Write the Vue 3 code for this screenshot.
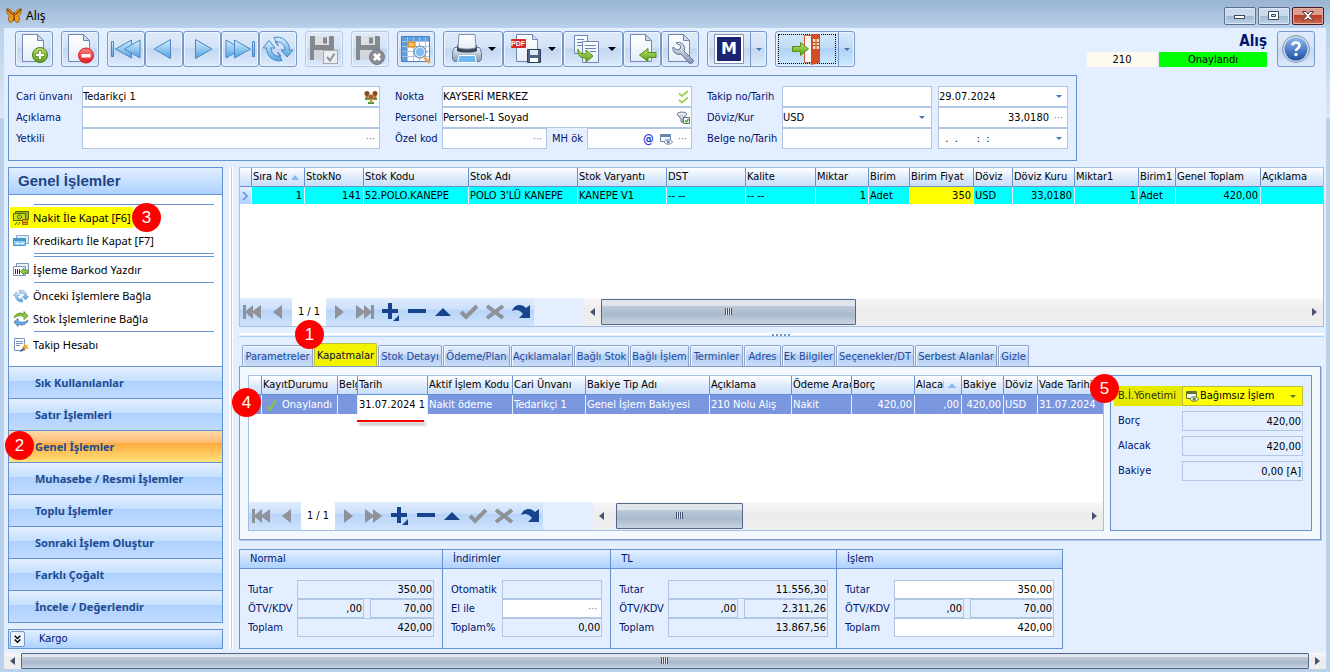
<script setup>
import { ref } from 'vue'

const tools = [
  { icon: 'new', label: 'Yeni' },
  { icon: 'remove', label: 'Sil', gap: true },
  { icon: 'first', label: 'İlk', gap: true },
  { icon: 'prev', label: 'Önceki' },
  { icon: 'next', label: 'Sonraki' },
  { icon: 'last', label: 'Son' },
  { icon: 'refresh', label: 'Yenile' },
  { icon: 'save', label: 'Kaydet', gap: true, disabled: true },
  { icon: 'discard', label: 'Vazgeç', gap: true, disabled: true },
  { icon: 'lookup', label: 'Ara', gap: true },
  { icon: 'print', label: 'Yazdır', gap: true, menu: true },
  { icon: 'pdf', label: 'PDF kaydet', menu: true, tag: 'PDF' },
  { icon: 'copy', label: 'Kopyala', menu: true },
  { icon: 'import', label: 'Aktar' },
  { icon: 'wrench', label: 'Ayarlar' },
  { icon: 'mail', label: 'M', gap: true, split: true, tag: 'M' },
  { icon: 'exit', label: 'Çıkış', gap: true, split: true, focus: true },
]

const tasks = [
  { line: true },
  { icon: 'cash', text: 'Nakit İle Kapat [F6]', mark: true, badge: 3 },
  { icon: 'cards', text: 'Kredikartı İle Kapat [F7]' },
  { line: true },
  { line: true },
  { icon: 'barcode', text: 'İşleme Barkod Yazdır' },
  { line: true },
  { icon: 'refresh', text: 'Önceki İşlemlere Bağla' },
  { icon: 'swap', text: 'Stok İşlemlerine Bağla' },
  { line: true },
  { icon: 'account', text: 'Takip Hesabı' },
]

const groups = [
  'Sık Kullanılanlar', 'Satır İşlemleri', 'Genel İşlemler', 'Muhasebe / Resmi İşlemler',
  'Toplu İşlemler', 'Sonraki İşlem Oluştur', 'Farklı Çoğalt', 'İncele / Değerlendir',
]
const activeGroup = ref('Genel İşlemler')

const lineCols = [
  { w: 11, t: '', v: '', mark: true },
  { w: 53, t: 'Sıra No', v: '1', r: true, sort: true },
  { w: 59, t: 'StokNo', v: '141', r: true },
  { w: 105, t: 'Stok Kodu', v: '52.POLO.KANEPE' },
  { w: 109, t: 'Stok Adı', v: "POLO 3'LÜ KANEPE" },
  { w: 89, t: 'Stok Varyantı', v: 'KANEPE V1' },
  { w: 79, t: 'DST', v: '-- --' },
  { w: 70, t: 'Kalite', v: '-- --' },
  { w: 53, t: 'Miktar', v: '1', r: true },
  { w: 41, t: 'Birim', v: 'Adet' },
  { w: 64, t: 'Birim Fiyat', v: '350', r: true, hot: true },
  { w: 39, t: 'Döviz', v: 'USD' },
  { w: 62, t: 'Döviz Kuru', v: '33,0180', r: true },
  { w: 64, t: 'Miktar1', v: '1', r: true },
  { w: 37, t: 'Birim1', v: 'Adet' },
  { w: 85, t: 'Genel Toplam', v: '420,00', r: true },
  { t: 'Açıklama', v: '' },
]

const closeCols = [
  { w: 12, t: '', v: '', mark: true },
  { w: 76, t: 'KayıtDurumu', v: 'Onaylandı', ok: true },
  { w: 20, t: 'Belge', v: '' },
  { w: 70, t: 'Tarih', v: '31.07.2024 1', edit: true },
  { w: 85, t: 'Aktif İşlem Kodu', v: 'Nakit ödeme' },
  { w: 73, t: 'Cari Ünvanı', v: 'Tedarikçi 1' },
  { w: 124, t: 'Bakiye Tip Adı', v: 'Genel İşlem Bakiyesi' },
  { w: 82, t: 'Açıklama', v: '210 Nolu Alış' },
  { w: 60, t: 'Ödeme Aracı', v: 'Nakit' },
  { w: 63, t: 'Borç', v: '420,00', r: true },
  { w: 47, t: 'Alacak', v: ',00', r: true, sort: true },
  { w: 42, t: 'Bakiye', v: '420,00', r: true },
  { w: 34, t: 'Döviz', v: 'USD' },
  { t: 'Vade Tarihi', v: '31.07.2024' },
]

const navIcons = ['n-first', 'n-prev', 'count', 'n-next', 'n-last', 'n-add', 'n-del', 'n-edit', 'n-ok', 'n-no', 'n-redo']
const closeNavIcons = navIcons.map((n) => (n === 'n-last' ? 'n-forward' : n))
const navNames = {
  'n-first': 'İlk kayıt', 'n-prev': 'Önceki kayıt', 'n-next': 'Sonraki kayıt', 'n-last': 'Son kayıt', 'n-forward': 'İleri',
  'n-add': 'Ekle', 'n-del': 'Sil', 'n-edit': 'Düzenle', 'n-ok': 'Onayla', 'n-no': 'İptal', 'n-redo': 'Yenile',
}

const tabs = [
  ['Parametreler', 71], ['Kapatmalar', 63], ['Stok Detayı', 64], ['Ödeme/Plan', 67], ['Açıklamalar', 62],
  ['Bağlı Stok', 55], ['Bağlı İşlem', 59], ['Terminler', 53], ['Adres', 37], ['Ek Bilgiler', 53],
  ['Seçenekler/DT', 78], ['Serbest Alanlar', 82], ['Gizle', 31],
]
const activeTab = ref('Kapatmalar')

const balances = [
  { id: 'bal-borc', label: 'Borç', value: '420,00' },
  { id: 'bal-alacak', label: 'Alacak', value: '420,00' },
  { id: 'bal-bakiye', label: 'Bakiye', value: '0,00 [A]' },
]

const totals = [
  { key: 'normal', title: 'Normal', rows: [['Tutar', ['350,00']], ['ÖTV/KDV', [',00', '70,00']], ['Toplam', ['420,00']]] },
  { key: 'ind', title: 'İndirimler', rows: [['Otomatik', ['']], ['El ile', [''], 'more'], ['Toplam%', ['0,00']]] },
  { key: 'tl', title: 'TL', rows: [['Tutar', ['11.556,30']], ['ÖTV/KDV', [',00', '2.311,26']], ['Toplam', ['13.867,56']]] },
  { key: 'islem', title: 'İşlem', rows: [['Tutar', ['350,00'], 'open'], ['ÖTV/KDV', [',00', '70,00']], ['Toplam', ['420,00'], 'open']] },
]
</script>

<template>
  <div class="window">
    <svg class="defs" width="0" height="0" aria-hidden="true">
      <defs>
        <linearGradient id="g-blue" x1="0" y1="0" x2="0" y2="1"><stop offset="0" stop-color="#d6efff" /><stop offset="1" stop-color="#4fa3e0" /></linearGradient>
        <linearGradient id="g-doc" x1="0" y1="0" x2="0" y2="1"><stop offset="0" stop-color="#ffffff" /><stop offset="1" stop-color="#e6edf7" /></linearGradient>
        <linearGradient id="g-green" x1="0" y1="0" x2="0" y2="1"><stop offset="0" stop-color="#bfe36a" /><stop offset="1" stop-color="#5b9c17" /></linearGradient>
        <linearGradient id="g-red" x1="0" y1="0" x2="0" y2="1"><stop offset="0" stop-color="#ff8080" /><stop offset="1" stop-color="#e01c1c" /></linearGradient>
        <linearGradient id="g-help" x1="0" y1="0" x2="0" y2="1"><stop offset="0" stop-color="#8fb8ee" /><stop offset="1" stop-color="#1c4fa5" /></linearGradient>
        <linearGradient id="g-steel" x1="0" y1="0" x2="0" y2="1"><stop offset="0" stop-color="#f0f4fa" /><stop offset="1" stop-color="#8094b4" /></linearGradient>
      </defs>
      <symbol id="i-page" viewBox="0 0 32 32">
        <path d="M4.500 1.500h15l6 6v21h-21z" fill="url(#g-doc)" stroke="#7288b4" />
        <path d="M19.500 1.500v6h6z" fill="#cfdcf0" stroke="#7288b4" />
      </symbol>
      <symbol id="i-new" viewBox="0 0 32 32">
        <use href="#i-page" />
        <circle cx="22" cy="22" r="7.500" fill="url(#g-green)" stroke="#4a7d12" />
        <path d="M20.500 17.500h3v3h3v3h-3v3h-3v-3h-3v-3h3z" fill="#fff" stroke="#4a7d12" stroke-width=".7" />
      </symbol>
      <symbol id="i-remove" viewBox="0 0 32 32">
        <use href="#i-page" />
        <circle cx="22" cy="22.500" r="7.500" fill="url(#g-red)" stroke="#d32020" />
        <rect x="17.500" y="21" width="9" height="3.500" fill="#fff" />
      </symbol>
      <symbol id="i-first" viewBox="0 0 32 32">
        <g fill="url(#g-blue)" stroke="#4c86c4" stroke-linejoin="round"><rect x="1.500" y="8.500" width="2" height="15" /><path d="M21.500 7v18L5.500 16z" /><path d="M30 7v18L14.500 16z" /></g>
      </symbol>
      <symbol id="i-prev" viewBox="0 0 32 32"><path d="M22.500 6.500v19L6 16z" fill="url(#g-blue)" stroke="#4c86c4" stroke-linejoin="round" /></symbol>
      <symbol id="i-next" viewBox="0 0 32 32"><path d="M9.500 6.500v19L26 16z" fill="url(#g-blue)" stroke="#4c86c4" stroke-linejoin="round" /></symbol>
      <symbol id="i-last" viewBox="0 0 32 32">
        <g fill="url(#g-blue)" stroke="#4c86c4" stroke-linejoin="round"><rect x="28.500" y="8.500" width="2" height="15" /><path d="M2 7v18l15.500-9z" /><path d="M10.500 7v18l16-9z" /></g>
      </symbol>
      <symbol id="i-refresh" viewBox="0 0 32 32">
        <g fill="url(#g-blue)" stroke="#4c86c4" stroke-linejoin="round">
          <path d="M12 4.500a12.500 12.500 0 0 1 15.500 12.500h3.500l-6 7-6-7h4a8 8 0 0 0-10-8l3.500 4z" />
          <path d="M20 27.500A12.500 12.500 0 0 1 4.500 15H1l6-7.500 6 7.500H9a8 8 0 0 0 10 8l-3.500-4z" />
        </g>
      </symbol>
      <symbol id="i-disk" viewBox="0 0 32 32">
        <path d="M2 3h23l1 1v23H2z" fill="#84898f" /><path d="M7 3h14v9H7z" fill="#dde1e6" /><path d="M15 4.500h4v6h-4z" fill="#84898f" /><path d="M6 17h16v10H6z" fill="#d3d7dd" />
      </symbol>
      <symbol id="i-save" viewBox="0 0 32 32">
        <use href="#i-disk" /><rect x="15.500" y="17.500" width="14" height="13" fill="#eceef1" stroke="#a3a8ae" /><path d="M19 24l3 3.500 4.500-7" fill="none" stroke="#92979d" stroke-width="2" />
      </symbol>
      <symbol id="i-discard" viewBox="0 0 32 32">
        <use href="#i-disk" /><circle cx="23" cy="24" r="7.500" fill="#8b8f95" stroke="#76797e" /><path d="M20 21l6 6m0-6l-6 6" stroke="#fff" stroke-width="3" />
      </symbol>
      <symbol id="i-lookup" viewBox="0 0 32 32">
        <path d="M1.500 3.500h28v25h-28z" fill="#fff" stroke="#4c7fbd" /><path d="M2 4h27v4H2zM2 4h5v24H2z" fill="#5f9edb" />
        <path d="M2 8.500h27M2 13.500h27M2 18.500h27M2 23.500h27M7.500 4v24M13.500 4v24M19.500 4v24M25.500 4v24" stroke="#a6c3e6" fill="none" />
        <path d="M8 9h7v5H8z" fill="#f8c05c" stroke="#c9761b" />
        <path d="M25 25l4 4" stroke="#f0a44c" stroke-width="3" stroke-linecap="round" /><circle cx="20" cy="19" r="6" fill="#cfe6fb" stroke="#5b7fae" /><circle cx="20" cy="19" r="4" fill="#82b8ec" />
      </symbol>
      <symbol id="i-print" viewBox="0 0 32 32">
        <path d="M3.500 14.500h25l2 5v7l-2 2h-25l-2-2v-7z" fill="url(#g-steel)" stroke="#6b7d9c" /><path d="M6 12h20v6c-4 2-16 2-20 0z" fill="#39465c" />
        <path d="M8 1.500h16l1 13c-4 2-14 2-18 0z" fill="url(#g-doc)" stroke="#7f8fab" /><path d="M8 22.500h16l1.500 7h-19z" fill="#6fb9f2" stroke="#fff" />
      </symbol>
      <symbol id="i-pdf" viewBox="0 0 32 32">
        <path d="M5.500 1.500h16l5 5v22h-21z" fill="url(#g-doc)" stroke="#7288b4" /><path d="M21.500 1.500v5h5" fill="#cfdcf0" stroke="#7288b4" />
        <path d="M16.500 16.500h13v13h-13z" fill="#4d6385" stroke="#2f3e58" /><path d="M19 17h8v5h-8z" fill="#dfe7f3" /><path d="M19 25h8v4h-8z" fill="#fff" />
      </symbol>
      <symbol id="i-copy" viewBox="0 0 32 32">
        <path d="M3.500 2.500h13v18h-13z" fill="url(#g-doc)" stroke="#7288b4" /><path d="M6 6.500h7M6 9.500h7M6 12.500h7" stroke="#5f84bf" />
        <path d="M11.500 8.500h16v21h-16z" fill="url(#g-doc)" stroke="#7288b4" /><path d="M14 12.500h11M14 15.500h11M19 18.500h6" stroke="#5f84bf" />
        <path d="M7 16c1 4 4 5 8 5v-4l7 6-7 6v-4c-6 0-9-3-8-9z" fill="url(#g-green)" stroke="#558d1a" />
      </symbol>
      <symbol id="i-import" viewBox="0 0 32 32">
        <use href="#i-page" /><path d="M30 19.500v5h-8v4l-8.500-6.500 8.500-6.500v4z" fill="url(#g-green)" stroke="#558d1a" />
      </symbol>
      <symbol id="i-wrench" viewBox="0 0 32 32">
        <use href="#i-page" /><path d="M12 10a6 6 0 0 1 8 8l9 9c1 3-2 4-4 3l-8-9a6 6 0 0 1-8-7l4 3 3-1 1-3z" fill="url(#g-steel)" stroke="#5e6f8e" />
      </symbol>
      <symbol id="i-mail" viewBox="0 0 32 32">
        <path d="M1.500 1.500h29v29h-29z" fill="#fff" stroke="#8593b5" /><path d="M4 4h24v24H4z" fill="#1b2470" />
      </symbol>
      <symbol id="i-exit" viewBox="0 0 32 32">
        <path d="M13.500 2.500h12v27h-12z" fill="#fff" stroke="#d9532c" /><path d="M20 1h9v29l-9 2z" fill="#d04f26" /><path d="M22 6h6v10h-6z" fill="#f3dcc4" /><path d="M22 9.500h6M22 12.500h6M25 6v10" stroke="#c0471f" />
        <path d="M1.500 13.500h8v-4l8 6.500-8 6.500v-4h-8z" fill="url(#g-green)" stroke="#558d1a" />
      </symbol>
      <symbol id="i-help" viewBox="0 0 32 32">
        <circle cx="16" cy="16" r="13.500" fill="#d3deed" stroke="#8695ae" /><circle cx="16" cy="16" r="11.500" fill="url(#g-help)" />
        <path d="M12.500 12.500c0-4 7-4 7 0 0 3-3.500 2.500-3.500 5.500" fill="none" stroke="#fff" stroke-width="2.500" /><circle cx="16" cy="21.500" r="1.700" fill="#fff" />
      </symbol>
      <symbol id="i-butterfly" viewBox="0 0 16 16">
        <path d="M8 6C6 2 2 0 .5 1c0 4 1.500 6 3 7C2 9 2 13 4 14.500c2 .5 3.500-2 4-4 .5 2 2 4.500 4 4C14 13 14 9 12.500 8c1.500-1 3-3 3-7C14 0 10 2 8 6z" fill="#ee9718" stroke="#6e3c0c" stroke-width=".6" /><path d="M8 4.500v8M1 1.500l5.500 5M15 1.500l-5.500 5" stroke="#4a2506" />
      </symbol>
      <symbol id="i-cash" viewBox="0 0 16 16">
        <path d="M2.500 1.500h13v8h-13z" fill="#a5b61a" stroke="#4e6a08" /><path d="M.5 3.500h12v7H.5z" fill="#c9dc20" stroke="#4e6a08" /><circle cx="6.500" cy="7" r="2" fill="none" stroke="#4e6a08" />
        <path d="M2 15l2-3m1 3l2-3" stroke="#4e6a08" /><path d="M9.500 9.500h5v5h-5z" fill="#f0a800" stroke="#9b6400" /><path d="M9 12.500h6" stroke="#9b6400" />
      </symbol>
      <symbol id="i-cards" viewBox="0 0 16 16">
        <path d="M3.500 2.500h12v8h-12z" fill="#dceefc" stroke="#8aa9cc" /><path d="M.5 5.500h12v7H.5z" fill="#8fd3f4" stroke="#4a94c8" /><path d="M1 6h11v2H1z" fill="#4a94c8" /><path d="M3 10.500h3M8 10.500h3" stroke="#fff" />
      </symbol>
      <symbol id="i-barcode" viewBox="0 0 16 16">
        <path d="M3.500 1.500h12v10h-12z" fill="#eef4fc" stroke="#7a93bd" /><path d="M.5 4.500h12v9H.5z" fill="#fff" stroke="#7a93bd" /><path d="M2.500 7v5M4.500 7v5M6.500 7v5" stroke="#28324c" /><path d="M15 8h-4V6L7.500 9.500 11 13v-2h4z" fill="#8cc63f" stroke="#4d8a1c" stroke-width=".7" />
      </symbol>
      <symbol id="i-swap" viewBox="0 0 16 16">
        <path d="M1 7c1-5 7-6 10-4V.5L15 5l-4 3.500V6C8 4 4 4.500 1 7z" fill="#8cc63f" stroke="#4d8a1c" stroke-width=".7" /><path d="M15 9c-1 5-7 6-10 4v2.500L1 11l4-3.500V10c3 2 7 1.500 10-1z" fill="#6aaee6" stroke="#2f67a8" stroke-width=".7" />
      </symbol>
      <symbol id="i-account" viewBox="0 0 16 16">
        <path d="M1.500 1.500h10v12h-10z" fill="#fff" stroke="#7a93bd" /><path d="M3 4.500h7M3 6.500h7M3 8.500h4" stroke="#7a93bd" /><path d="M7.500 14.500L12 10" stroke="#35507e" stroke-width="1.500" /><path d="M11.500 6l1 2.500 2.500-1-1 2.500 2 2-3-.5-1.500 2.500v-3l-3-1 2.500-1z" fill="#f5a623" />
      </symbol>
      <symbol id="i-people" viewBox="0 0 16 16">
        <path d="M2 9h4v2H2zM10 9h4v2h-4zM5 13h6v2H5z" fill="#4b9a3a" /><path d="M2.500 6.500h3v3h-3zM10.500 6.500h3v3h-3z" fill="#b5762f" /><circle cx="4" cy="4.500" r="2.500" fill="#8a4b1c" /><circle cx="12" cy="4.500" r="2.500" fill="#8a4b1c" /><path d="M6.500 9.500h3v4h-3z" fill="#d79a55" /><circle cx="8" cy="8" r="2.500" fill="#a55f28" />
      </symbol>
      <symbol id="i-checks" viewBox="0 0 16 16"><path d="M4 4.500l3 2.500 6-5M4 11l3 2.500 6-5" fill="none" stroke="#a6d158" stroke-width="2" /></symbol>
      <symbol id="i-filter" viewBox="0 0 16 16">
        <ellipse cx="7" cy="4" rx="5" ry="2" fill="#e4e8ee" stroke="#6d7a8e" /><path d="M2.500 5l3.500 4v3h2V9l3-4" fill="#c8ced8" stroke="#6d7a8e" /><path d="M8.500 7.500h6v6h-6z" fill="#fff" stroke="#5d6f8c" /><path d="M10 10.500l1.500 1.500 2-3" fill="none" stroke="#55a630" stroke-width="1.500" />
      </symbol>
      <symbol id="i-view" viewBox="0 0 16 16">
        <path d="M2.500 3.500h10v7h-10z" fill="#f4f8fd" stroke="currentColor" /><path d="M3 4h9v2H3z" fill="currentColor" /><path d="M6 11c1.500-3 7-3 8.500 0-1.500 3-7 3-8.500 0z" fill="#fff" stroke="currentColor" /><circle cx="10.200" cy="11" r="1.600" fill="currentColor" />
      </symbol>
      <symbol id="i-tick" viewBox="0 0 16 16"><path d="M3 9l3 4 6-10" fill="none" stroke="#8bc53f" stroke-width="2" /></symbol>
      <symbol id="i-n-first" viewBox="0 0 20 20"><path d="M0 3h3v6l7-6v6l8-6v14l-8-6v6l-7-6v6H0z" fill="#8f9399" /></symbol>
      <symbol id="i-n-prev" viewBox="0 0 20 20"><path d="M13 3v14l-9-7z" fill="#8f9399" /></symbol>
      <symbol id="i-n-next" viewBox="0 0 20 20"><path d="M6 3v14l9-7z" fill="#8f9399" /></symbol>
      <symbol id="i-n-last" viewBox="0 0 20 20"><path d="M19 3h-3v6L9 3v6L1 3v14l8-6v6l7-6v6h3z" fill="#8f9399" /></symbol>
      <symbol id="i-n-forward" viewBox="0 0 20 20"><path d="M1 3v14l8-6v6l9-7-9-7v6z" fill="#8f9399" /></symbol>
      <symbol id="i-n-add" viewBox="0 0 20 20"><path d="M7 1h4v6h6v4h-6v6H7v-6H1V7h6zM18 13v6h-6z" fill="#17448c" /></symbol>
      <symbol id="i-n-del" viewBox="0 0 20 20"><path d="M1 7h18v4H1z" fill="#17448c" /></symbol>
      <symbol id="i-n-edit" viewBox="0 0 20 20"><path d="M2 14l8-8 8 8z" fill="#17448c" /></symbol>
      <symbol id="i-n-ok" viewBox="0 0 20 20"><path d="M2 10l5 5L18 4" fill="none" stroke="#8f9399" stroke-width="4" /></symbol>
      <symbol id="i-n-no" viewBox="0 0 20 20"><path d="M2 4l16 12M18 4L2 16" stroke="#8f9399" stroke-width="4" /></symbol>
      <symbol id="i-n-redo" viewBox="0 0 20 20"><path d="M1 9c2-7 10-8 14-3l4-3v13H8l4-4c-3-4-7-5-11-3z" fill="#17448c" /></symbol>
    </svg>

    <header class="titlebar">
      <svg class="ic16"><use href="#i-butterfly" /></svg>
      <span class="app-name">Alış</span>
      <div class="win-buttons">
        <button type="button" aria-label="Simge durumuna küçült"><svg viewBox="0 0 32 18"><rect x="10.500" y="8.500" width="10" height="3" fill="#fff" stroke="#3d4a5c" /></svg></button>
        <button type="button" aria-label="Ekranı kapla"><svg viewBox="0 0 32 18"><path d="M10.500 4.500h10v8h-10zM13.500 7.500v2h4v-2z" fill="#fff" fill-rule="evenodd" stroke="#3d4a5c" /></svg></button>
        <button type="button" class="close" aria-label="Kapat"><svg viewBox="0 0 32 18"><path d="M10.500 4.500h3.500l2 2.500 2-2.500h3.500l-4 4.500 4 4h-3.500l-2-2-2 2h-3.500l4-4z" fill="#fff" stroke="#5a3438" /></svg></button>
      </div>
    </header>

    <main class="client">
      <div class="toolbar">
        <div v-for="t in tools" :key="t.icon" class="tool" :class="{ gap: t.gap, menu: t.menu, split: t.split, focus: t.focus }">
          <button type="button" class="tool-main" :disabled="t.disabled" :aria-label="t.label">
            <span class="glyph"><svg class="ic32"><use :href="'#i-' + t.icon" /></svg><span v-if="t.tag" :class="'tag-' + t.icon">{{ t.tag }}</span></span>
            <i v-if="t.menu" class="caret black"></i>
          </button>
          <button v-if="t.split" type="button" class="tool-drop" :aria-label="t.label + ' seçenekleri'"><i class="caret"></i></button>
        </div>
        <div class="status">
          <h1>Alış</h1>
          <div class="status-row"><output class="doc-no">210</output><output class="state">Onaylandı</output></div>
        </div>
        <button type="button" class="help" aria-label="Yardım"><svg class="ic32"><use href="#i-help" /></svg></button>
      </div>

      <form class="form" @submit.prevent>
        <label for="cari">Cari ünvanı</label>
        <div class="field"><input id="cari" value="Tedarikçi 1" /><button type="button" aria-label="Cari seç"><svg class="ic16"><use href="#i-people" /></svg></button></div>
        <label for="nokta">Nokta</label>
        <div class="field"><input id="nokta" value="KAYSERİ MERKEZ" /><button type="button" aria-label="Nokta seç"><svg class="ic16"><use href="#i-checks" /></svg></button></div>
        <label for="takip">Takip no/Tarih</label>
        <div class="field"><input id="takip" /></div>
        <div class="field after"><input id="tarih" aria-label="Tarih" value="29.07.2024" /><button type="button" aria-label="Tarih seç"><i class="caret"></i></button></div>

        <label for="aciklama">Açıklama</label>
        <div class="field"><input id="aciklama" /></div>
        <label for="personel">Personel</label>
        <div class="field"><input id="personel" value="Personel-1 Soyad" /><button type="button" aria-label="Personel seç"><svg class="ic16"><use href="#i-filter" /></svg></button></div>
        <label for="doviz">Döviz/Kur</label>
        <div class="field"><select id="doviz"><option>USD</option></select><i class="caret over"></i></div>
        <div class="field after"><input class="num" aria-label="Kur" value="33,0180" /><button type="button" class="dots" aria-label="Kur seç">···</button></div>

        <label for="yetkili">Yetkili</label>
        <div class="field"><input id="yetkili" /><button type="button" class="dots" aria-label="Yetkili seç">···</button></div>
        <label for="ozel">Özel kod</label>
        <div class="pair">
          <div class="field"><input id="ozel" /><button type="button" class="dots" aria-label="Özel kod seç">···</button></div>
          <label for="mhok">MH ök</label>
          <div class="field"><input id="mhok" /><button type="button" class="at" aria-label="E-posta">@</button><button type="button" aria-label="Görüntüle"><svg class="ic16 steel"><use href="#i-view" /></svg></button><button type="button" class="dots" aria-label="MH ök seç">···</button></div>
        </div>
        <label for="belge">Belge no/Tarih</label>
        <div class="field"><input id="belge" /></div>
        <div class="field after"><input aria-label="Belge tarihi" class="mask" value="  .  .      :  :" /><button type="button" aria-label="Belge tarihi seç"><i class="caret"></i></button></div>
      </form>

      <div class="work">
        <aside class="sidebar">
          <section class="nav-box">
            <h2>Genel İşlemler</h2>
            <ul class="tasks">
              <li v-for="(t, i) in tasks" :key="i" :class="{ line: t.line }">
                <button v-if="t.text" type="button" :class="{ mark: t.mark }"><svg class="ic16"><use :href="'#i-' + t.icon" /></svg>{{ t.text }}</button>
                <b v-if="t.badge" class="badge b3">{{ t.badge }}</b>
              </li>
            </ul>
            <div v-for="g in groups" :key="g" class="group" :class="{ on: g === activeGroup }">
              <button type="button" @click="activeGroup = g">{{ g }}</button>
              <b v-if="g === 'Genel İşlemler'" class="badge b2">2</b>
            </div>
          </section>
          <div class="cargo">
            <button type="button" aria-label="Kargo bölümünü aç"><svg viewBox="0 0 14 14"><path d="M4 3l3 3 3-3M4 7l3 3 3-3" fill="none" stroke="#000" stroke-width="1.500" /></svg></button>
            <span>Kargo</span>
          </div>
        </aside>

        <div class="vsplit"></div>

        <div class="content">
          <section class="sheet lines">
            <div class="sheet-body">
              <table>
                <colgroup><col v-for="c in lineCols" :key="c.t" :style="{ width: c.w ? c.w + 'px' : 'auto' }" /></colgroup>
                <thead><tr><th v-for="c in lineCols" :key="c.t" :class="{ sort: c.sort }">{{ c.t }}<i v-if="c.sort" class="up"></i></th></tr></thead>
                <tbody><tr><td v-for="c in lineCols" :key="c.t" :class="{ num: c.r, hot: c.hot, rowmark: c.mark }"><svg v-if="c.mark" viewBox="0 0 10 16"><path d="M3 4l4 4-4 4" fill="none" stroke="#5b8fd6" stroke-width="1.500" /></svg>{{ c.v }}</td></tr></tbody>
              </table>
            </div>
            <div class="navbar">
              <div class="nav-icons">
                <template v-for="n in navIcons" :key="n"><span v-if="n === 'count'" class="count">1 / 1</span><button v-else type="button" :aria-label="navNames[n]"><svg><use :href="'#i-' + n" /></svg></button></template>
              </div>
              <div class="hscroll">
                <button type="button" class="arrow left" aria-label="Sola kaydır"></button><div class="thumb wide"></div><button type="button" class="arrow right" aria-label="Sağa kaydır"></button>
              </div>
            </div>
          </section>

          <div class="hsplit"></div>

          <div class="tabs" role="tablist">
            <div v-for="t in tabs" :key="t[0]" class="tab" :class="{ on: t[0] === activeTab }" :style="{ width: t[1] + 'px' }">
              <button type="button" role="tab" :aria-selected="t[0] === activeTab" @click="activeTab = t[0]">{{ t[0] }}</button>
              <b v-if="t[0] === 'Kapatmalar'" class="badge b1">1</b>
            </div>
          </div>
          <div class="tabpage">
            <section class="sheet closings">
              <div class="sheet-body">
                <table>
                  <colgroup><col v-for="c in closeCols" :key="c.t" :style="{ width: c.w ? c.w + 'px' : 'auto' }" /></colgroup>
                  <thead><tr><th v-for="c in closeCols" :key="c.t" :class="{ sort: c.sort }">{{ c.t }}<i v-if="c.sort" class="up"></i></th></tr></thead>
                  <tbody><tr><td v-for="c in closeCols" :key="c.t" :class="{ num: c.r, edit: c.edit, rowmark: c.mark, ok: c.ok }"><svg v-if="c.ok" class="ic16"><use href="#i-tick" /></svg>{{ c.v }}</td></tr></tbody>
                </table>
                <i class="underline"></i>
              </div>
              <div class="navbar">
                <div class="nav-icons">
                  <template v-for="n in closeNavIcons" :key="n"><span v-if="n === 'count'" class="count">1 / 1</span><button v-else type="button" :aria-label="navNames[n]"><svg><use :href="'#i-' + n" /></svg></button></template>
                </div>
                <div class="hscroll">
                  <button type="button" class="arrow left" aria-label="Sola kaydır"></button><div class="thumb narrow"></div><button type="button" class="arrow right" aria-label="Sağa kaydır"></button>
                </div>
              </div>
              <b class="badge b4">4</b>
            </section>
            <section class="balance">
              <div class="bal-row mark">
                <label for="yonetim">B.İ.Yönetimi</label>
                <div class="field"><svg class="ic16"><use href="#i-view" /></svg><select id="yonetim"><option>Bağımsız İşlem</option></select><i class="caret over"></i></div>
              </div>
              <div v-for="b in balances" :key="b.id" class="bal-row">
                <label :for="b.id">{{ b.label }}</label>
                <div class="field"><input :id="b.id" class="num" readonly :value="b.value" /></div>
              </div>
              <b class="badge b5">5</b>
            </section>
          </div>

          <div class="totals">
            <section v-for="g in totals" :key="g.key" class="total" :class="g.key">
              <h3>{{ g.title }}</h3>
              <div class="total-body">
                <div v-for="(r, i) in g.rows" :key="i" class="total-row" :class="r[2]">
                  <label :for="g.key + i">{{ r[0] }}</label>
                  <div class="field" v-for="(v, j) in r[1]" :key="j" :class="{ small: r[1].length > 1 && j === 0 }">
                    <input :id="j === 0 ? g.key + i : g.key + i + 'b'" :aria-label="j ? 'KDV' : null" class="num" :readonly="!r[2]" :value="v" />
                    <button v-if="r[2] === 'more'" type="button" class="dots" aria-label="İndirim seç">···</button>
                  </div>
                </div>
              </div>
            </section>
          </div>
        </div>
      </div>
    </main>

    <div class="hscroll page-scroll">
      <button type="button" class="arrow left" aria-label="Sola kaydır"></button><div class="thumb full"></div><button type="button" class="arrow right" aria-label="Sağa kaydır"></button>
    </div>
  </div>
</template>

<style>
body { background: #b9d1ea; }
</style>

<style scoped>
.window {
  box-sizing: border-box; min-height: 100vh; padding: 0 4px 3px; display: flex; flex-direction: column;
  font: 11px/14px "DejaVu Sans Condensed", "DejaVu Sans", sans-serif; color: #000;
  background: linear-gradient(#99b4d1 0, #b9d1ea 28px, #dbe8f5 118px, #b9d1ea 118px);
}
.window *, .window *::before, .window *::after { box-sizing: border-box; }
.defs { position: absolute; }
button, input, select { font: inherit; color: inherit; margin: 0; padding: 0; border: 0; background: none; border-radius: 0; outline: 0; }
h1, h2, h3, ul { margin: 0; padding: 0; list-style: none; }
.ic16 { width: 16px; height: 16px; flex: none; display: block; }
.ic32 { width: 32px; height: 32px; flex: none; display: block; }
.num { text-align: right; }
.caret { width: 0; height: 0; border: 3px solid transparent; border-top-color: #4677b5; border-bottom: 0; flex: none; }
.caret.black { border-width: 4px 4px 0; border-top-color: #000; }

.titlebar { height: 28px; display: flex; align-items: center; padding: 4px 2px 0; gap: 4px; }
.app-name { font: 12px/16px "Noto Sans", sans-serif; flex: 1; }
.win-buttons { display: flex; gap: 2px; }
.win-buttons button { width: 32px; height: 18px; border: 1px solid #5b6f8c; border-radius: 2px; background: linear-gradient(#c9daec 50%, #a3bad3 50%, #bdd2e8); box-shadow: inset 0 0 0 1px #dce8f5; }
.win-buttons .close { border-color: #4b1a1e; background: linear-gradient(#dc9c8e 45%, #b83c25 45%, #d0694c); box-shadow: inset 0 0 0 1px #e5b0a4; }
.win-buttons svg { display: block; width: 32px; height: 18px; margin: -1px; }

.client { flex: 1; background: #e3efff; padding: 3px 2px 4px 4px; }
.toolbar { display: flex; padding: 0 9px 0 7px; height: 36px; margin-bottom: 8px; }
.tool { display: flex; width: 38px; border: 1px solid #7899ca; border-radius: 3px; background: linear-gradient(#dfebfa, #d3e3f6 45%, #c3d7f0 50%, #dceafc); box-shadow: inset 0 0 0 1px #ecf4fd; }
.tool.gap { margin-left: 8px; }
.tool.menu { width: 60px; }
.tool.split { width: 60px; }
.tool.focus { width: 80px; background: linear-gradient(#d5e9fb, #c2dcf6 45%, #b0d2f5 50%, #cdeafe); }
.tool-main { flex: 1; display: flex; align-items: center; justify-content: center; gap: 5px; min-width: 0; }
.tool:has(:disabled) { border-color: #b4c9e6; }
.tool.focus .tool-main { border: 1px dotted #000; margin: 2px; }
.tool-drop { width: 16px; border-left: 1px solid #7899ca; display: flex; align-items: center; justify-content: center; }
.glyph { position: relative; flex: none; }
.tag-pdf { position: absolute; left: 0; top: 6px; width: 15px; height: 9px; border-radius: 1px; background: #d42a2a; color: #fff; font: bold 7px/9px "Liberation Sans", sans-serif; text-align: center; }
.tag-mail { position: absolute; left: 0; top: 0; width: 32px; color: #fff; font: bold 16px/32px "DejaVu Sans", sans-serif; text-align: center; }
.status { margin-left: auto; width: 180px; }
h1 { font: bold 15px/21px "DejaVu Sans Condensed", sans-serif; color: #00146e; text-align: right; }
.status-row { display: flex; gap: 2px; line-height: 15px; text-align: center; }
.doc-no { width: 70px; background: #fffaf0; }
.state { flex: 1; background: #00ff00; }
.help { width: 38px; margin-left: 10px; border: 1px solid #7899ca; border-radius: 3px; display: flex; align-items: center; justify-content: center; background: linear-gradient(#dfebfa, #d3e3f6 45%, #c3d7f0 50%, #dceafc); }

.form {
  max-width: 1069px; border: 1px solid #6593cf; padding: 10px 8px 11px 7px; color: #00146e;
  display: grid; grid-template-columns: 66px 298fr 62px 250fr 90px 150fr 136fr; grid-auto-rows: 21px; align-items: center;
}
.form > label:nth-of-type(3n + 2), .form > label:nth-of-type(3n) { padding-left: 15px; }
.field { position: relative; display: flex; align-items: center; height: 21px; min-width: 0; border: 1px solid #b0c6e4; background: #fff; color: #000; }
.field.after { margin-left: 6px; }
.field input, .field select { flex: 1; min-width: 0; width: 0; height: 100%; padding: 0 1px 0 0; }
.field select { appearance: none; }
.field button { display: flex; align-items: center; justify-content: center; min-width: 17px; }
.field .dots { color: #5f87b8; line-height: 10px; }
.field .at { color: #1c3fd6; font-size: 12px; font-weight: bold; }
.field .steel { color: #6b86ab; }
.field .mask { white-space: pre; }
.over { position: absolute; right: 6px; top: 8px; pointer-events: none; }
.pair { display: flex; align-items: center; }
.pair label { padding: 0 5px; width: 40px; flex: none; white-space: nowrap; }
.pair .field { flex: 1; }

.work { display: flex; margin-top: 6px; }
.sidebar { width: 215px; flex: none; display: flex; flex-direction: column; gap: 6px; }
.nav-box { flex: 1; display: flex; flex-direction: column; border: 1px solid #6593cf; background: #fff; }
h2 { font: bold 15px/26px "Liberation Sans", sans-serif; color: #1f4484; padding-left: 9px; background: linear-gradient(#e3efff, #add1ff); border-bottom: 1px solid #6593cf; }
.tasks { flex: 1; padding-top: 9px; font: 11px/15px "Noto Sans", sans-serif; }
.tasks li { position: relative; margin: 2px 0; }
.tasks li:first-child { margin-top: 0; }
.tasks .line { height: 1px; margin-left: 25px; margin-right: 8px; background: #6593cf; }
.tasks button { height: 21px; margin-left: 1px; padding: 0 2px 0 3px; display: flex; align-items: center; gap: 4px; white-space: nowrap; }
.tasks .mark { background: #ffff00; }
.group { position: relative; height: 32px; border-top: 1px solid #6593cf; background: linear-gradient(#e3efff, #c4dfff 45%, #add1ff 45%, #c0dbff); }
.group button { width: 100%; height: 100%; padding-left: 26px; text-align: left; font: bold 11px/15px "Noto Sans", sans-serif; color: #1f4b8f; }
.group.on { background: linear-gradient(#ffd9aa, #ffbb6e 40%, #ffab3f 40%, #fee17a); }
.cargo { height: 20px; display: flex; align-items: center; gap: 14px; border: 1px solid #6593cf; background: linear-gradient(#e3efff, #add1ff); color: #00146e; }
.cargo button { width: 15px; height: 16px; margin-left: 1px; border: 1px solid #7899ca; border-radius: 2px; background: #eef5ff; }
.cargo svg { display: block; }

.vsplit { width: 4px; flex: none; margin: 0 6px; border: solid #fff; border-width: 0 1px 0 2px; background: #add1ff; }
.content { flex: 1; min-width: 0; }
.sheet { position: relative; display: flex; flex-direction: column; border: 1px solid #a3c0e4; background: #fff; }
.sheet-body { position: relative; }
.lines .sheet-body { min-height: 130px; }
.closings .sheet-body { min-height: 126px; }
table { width: 100%; table-layout: fixed; border-collapse: separate; border-spacing: 0; }
th, td { position: relative; padding: 0 2px 0 1px; overflow: hidden; white-space: nowrap; font-weight: normal; text-align: left; }
th { height: 19px; padding-right: 0; border-bottom: 1px solid #6593cf; border-left: 1px solid #6593cf; background: linear-gradient(#fff, #d9e8fb 60%, #cbdffa); }
th:first-child { border-left: 0; }
td { height: 18px; border-left: 1px solid #e3efff; border-bottom: 1px solid #fff; background: #00ffff; }
td:first-child { border-left: 0; }
td.num { text-align: right; }
td.hot { background: #ffff00; }
.lines .rowmark { padding: 0; background: linear-gradient(#e3efff, #add1ff); }
.rowmark svg { display: block; width: 10px; height: 16px; }
.up { position: absolute; top: 0; bottom: 0; right: 0; width: 17px; background: linear-gradient(#fff, #d9e8fb 60%, #cbdffa); }
.up::after { content: ""; position: absolute; left: 4px; top: 7px; border: 4px solid transparent; border-top: 0; border-bottom: 5px solid #85b8f8; }
.closings td { height: 20px; background: #7a96df; color: #fff; }
.closings td.edit { background: #fff; color: #000; padding-right: 0; }
td.ok svg { display: inline-block; vertical-align: middle; margin: 0 2px 0 1px; }
.underline { position: absolute; left: 108px; top: 44px; width: 67px; height: 2px; background: #f00; box-shadow: 2px 3px 3px rgba(0, 0, 0, 0.35); }

.navbar { height: 28px; display: flex; background: #e3efff; }
.nav-icons { display: flex; flex: none; width: 344px; }
.nav-icons button { width: 26px; display: flex; align-items: center; justify-content: center; background: linear-gradient(#dfecfd, #cbe0fb 40%, #b7d4f8 45%, #cfe3fc); }
.nav-icons svg { width: 20px; height: 20px; display: block; }
.count { width: 34px; background: #fff; text-align: center; line-height: 28px; }
.hscroll { flex: 1; display: flex; background: linear-gradient(#f8f8f8, #ececec 40%, #efefef); }
.arrow { position: relative; width: 17px; flex: none; }
.arrow::after { content: ""; position: absolute; top: 50%; left: 6px; margin-top: -4px; border: 4px solid transparent; }
.arrow.left::after { border-left: 0; border-right: 5px solid #45526f; }
.arrow.right::after { border-right: 0; border-left: 5px solid #45526f; }
.arrow.right { margin-left: auto; }
.thumb { position: relative; border: 1px solid #54678a; border-radius: 1px; margin: 1px 0; background: linear-gradient(#e0e5eb 25%, #bfcad9 25%, #a9b9cc 60%, #c8d4e0); }
.thumb::after { content: ""; position: absolute; left: 50%; top: 50%; width: 7px; height: 7px; margin: -4px; background: repeating-linear-gradient(90deg, #3f5070 0 1px, #e4e9f0 1px 2px); }
.wide { width: 255px; }
.narrow { width: 127px; margin-left: 6px; }
.full { flex: 1; margin: 0; }

.hsplit { position: relative; height: 4px; margin-top: 6px; border-top: 2px solid #fff; border-bottom: 1px solid #add1ff; }
.hsplit::after { content: ""; position: absolute; left: 50%; top: -1px; width: 19px; height: 2px; margin-left: -10px; background: repeating-linear-gradient(90deg, #6593cf 0 2px, #fff 2px 4px); }
.tabs { display: flex; align-items: flex-end; gap: 1px; height: 29px; padding-left: 3px; }
.tab { position: relative; height: 21px; border: 1px solid #8ba3cb; border-bottom: 0; border-radius: 2px 2px 0 0; background: linear-gradient(#e3efff, #cfe1f9 40%, #b3cef2 50%, #c9ddf8); box-shadow: inset 1px 1px 0 #f3f8ff; }
.tab button { width: 100%; height: 100%; padding-top: 2px; display: flex; align-items: center; justify-content: center; white-space: nowrap; color: #1f4b9c; }
.tab.on { height: 23px; background: #f3f300; border-color: #b9bd3a; box-shadow: none; }
.tab.on button { color: #001030; }
.tabpage { margin-right: 3px; padding: 8px; display: flex; gap: 6px; border: 1px solid #7f9bca; background: #f3f8ff; box-shadow: 1px 1px 0 #b0c6e4; }
.closings { flex: 1; min-width: 0; }
.balance { position: relative; width: 202px; flex: none; padding: 10px 8px 0 3px; border: 1px solid #6593cf; background: #e3efff; color: #00146e; }
.bal-row { display: flex; height: 20px; margin-bottom: 5px; align-items: center; }
.bal-row label { width: 68px; padding-left: 4px; white-space: nowrap; }
.bal-row .field { flex: 1; height: 20px; background: #e3efff; }
.bal-row.mark { background: #e6ea00; color: #303000; }
.bal-row.mark .field { background: #ffff00; border-color: #b9bd3a; color: #000; }
.bal-row.mark svg { color: #5f7430; margin-left: 1px; }
.bal-row.mark .caret { border-top-color: #5f6f20; }

.totals { display: flex; margin-top: 9px; max-width: 824px; border: 1px solid #6593cf; border-right: 0; }
.total { border-right: 1px solid #6593cf; color: #00146e; }
.total.normal { flex: 203 1 0; }
.total.ind { flex: 168 1 0; }
.total.tl { flex: 226 1 0; }
.total.islem { flex: 226 1 0; }
h3 { font: inherit; line-height: 18px; padding-left: 10px; border-bottom: 1px solid #6593cf; background: linear-gradient(#e3efff, #add1ff); }
.total-body { padding: 11px 8px; }
.total-row { display: flex; align-items: center; height: 19px; gap: 4px; }
.total-row label { width: 45px; flex: none; white-space: nowrap; }
.ind .total-row label { width: 47px; }
.total-row .field { flex: 1; height: 19px; background: #e3efff; }
.total-row .small { flex: none; width: 67px; }
.total-row .small + .field { margin-left: 2px; }
.tl .small, .islem .small { width: 70px; }
.total-row.open .field, .total-row.more .field { background: #fff; }

.page-scroll { flex: none; height: 16px; }

.badge { position: absolute; z-index: 2; width: 29px; height: 29px; border-radius: 50%; background: #f00; color: #fff; text-align: center; font: 17px/29px "Liberation Sans", sans-serif; }
.b1 { left: -20px; top: -24px; }
.b2 { left: -4px; top: 0; }
.b3 { left: 123px; top: -4px; }
.b4 { left: -17px; top: 12px; }
.b5 { left: -21px; top: -2px; }
</style>
